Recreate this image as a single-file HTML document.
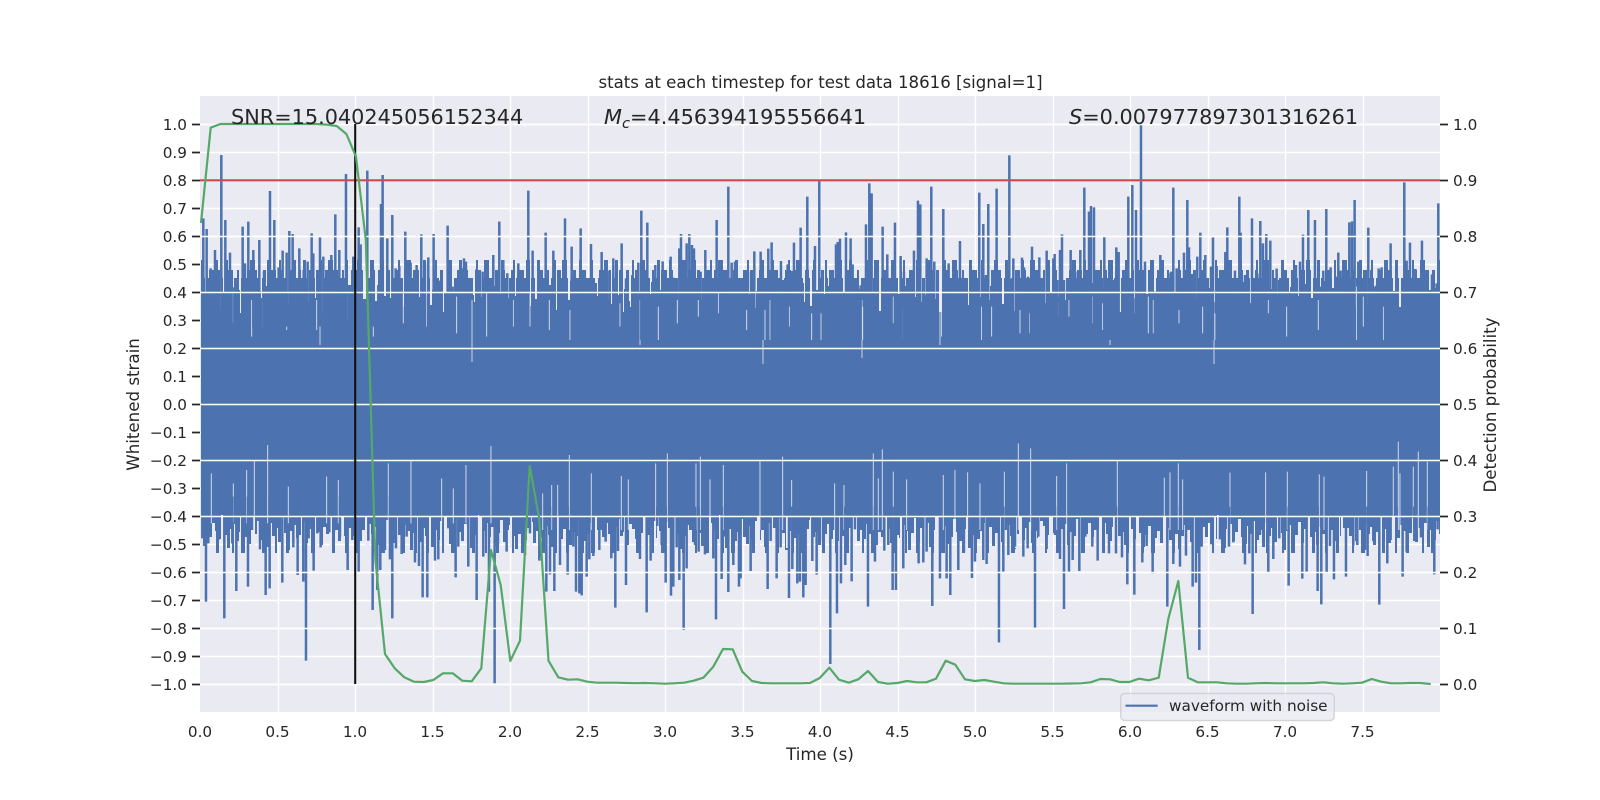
<!DOCTYPE html>
<html><head><meta charset="utf-8"><title>stats at each timestep</title>
<style>html,body{margin:0;padding:0;background:#fff}svg{display:block}text{font-family:"DejaVu Sans","Liberation Sans",sans-serif;fill:#262626}</style></head>
<body>
<svg width="1600" height="800" viewBox="0 0 1600 800" xmlns="http://www.w3.org/2000/svg">
<defs>
<clipPath id="ax"><rect x="201" y="96" width="1239" height="616"/></clipPath>
<g id="seg">
<path fill="#4c72b0" d="M0 340V305h3V298h3V312h3V301h3V294h3V308h3V316h3V299h3V303h3V290h3V311h3V306h3V296h3V319h3V302h3V288h3V300h3V309h3V314h3V297h3V304h3V292h3V313h3V307h3V295h3V318h3V301h3V286h3V299h3V310h3V305h3V293h3V315h3V302h3V289h3V308h3V298h3V312h3V304h3V296h3V320h3V300h3V287h3V306h3V311h3V294h3V303h3V316h3V298h3V291h3V309h3V301h3V314h3V295h3V305h3V288h3V312h3V299h3V307h3V293h3V317h3V302h3V285h3V304h3V310h3V297h3V300h3V313h3V292h3V306h3V315h3V298h3V303h3V290h3V308h3V301h3V311h3V296h3V305h3V294h3V318h3V299h3V307h3V340z"/>
</g>
</defs>
<rect x="200" y="96" width="1240" height="616" fill="#eaeaf2"/>
<g stroke="#fff" stroke-width="1.4" fill="none">
<path d="M278.5 96V712M355.5 96V712M433.5 96V712M510.5 96V712M588.5 96V712M665.5 96V712M743.5 96V712M820.5 96V712M898.5 96V712M975.5 96V712M1053.5 96V712M1130.5 96V712M1208.5 96V712M1285.5 96V712M1363.5 96V712"/>
<path d="M200 124.5H1440M200 152.5H1440M200 180.5H1440M200 208.5H1440M200 236.5H1440M200 264.5H1440M200 292.5H1440M200 320.5H1440M200 348.5H1440M200 376.5H1440M200 404.5H1440M200 432.5H1440M200 460.5H1440M200 488.5H1440M200 516.5H1440M200 544.5H1440M200 572.5H1440M200 600.5H1440M200 628.5H1440M200 656.5H1440M200 684.5H1440"/>
</g>
<g clip-path="url(#ax)">
<rect x="200" y="325" width="1240" height="180" fill="#4c72b0"/>
<use href="#seg" transform="translate(201,-6)"/>
<use href="#seg" transform="translate(699,-6) scale(-1,1)"/>
<use href="#seg" transform="translate(699,-6)"/>
<use href="#seg" transform="translate(1197,-6) scale(-1,1)"/>
<use href="#seg" transform="translate(1197,-6)"/>
<use href="#seg" transform="translate(101,835) scale(1,-1)"/>
<use href="#seg" transform="translate(599,835) scale(-1,-1)"/>
<use href="#seg" transform="translate(599,835) scale(1,-1)"/>
<use href="#seg" transform="translate(1097,835) scale(-1,-1)"/>
<use href="#seg" transform="translate(1097,835) scale(1,-1)"/>
<use href="#seg" transform="translate(1595,835) scale(-1,-1)"/>
<!-- density layers top: each reaches down into the solid band -->
<g fill="none" stroke="#4c72b0">
<path stroke-width="44" stroke-dasharray="4 2 3 3 6 2 2 4 5 2 4 3 3 2 7 3" d="M201 300H1440"/>
<path stroke-width="52" stroke-dasharray="3 5 5 4 2 7 6 4 2 8 4 3 3 6" d="M201 296H1440"/>
<path stroke-width="62" stroke-dasharray="2 11 4 7 3 14 2 6 5 12 3 9" d="M201 291H1440"/>
</g>
<!-- gaps + density bottom -->
<path fill="none" stroke="#eaeaf2" stroke-width="32" stroke-dasharray="2 13 3 21 2 9 4 27 2 17 3 11" d="M201 532H1440"/>
<path fill="none" stroke="#4c72b0" stroke-width="48" stroke-dasharray="2 9 3 13 2 7 4 17 3 10" d="M205 529H1440"/>
<!-- top thin slits -->
<g stroke="#eaeaf2" stroke-width="3" opacity=".85" fill="none">
<path transform="translate(120,60) scale(.3333)" d="M340 700V790M395 720V830M430 700V800M500 710V810M590 720V810M680 700V780M760 700V830M850 700V790M920 690V800M1010 710V820M1100 700V830M1180 720V800M1230 700V800"/>
<path transform="translate(540,80) scale(.3333)" d="M28 660V750M90 690V780M240 670V740M355 680V780M412 660V730M475 660V710M535 640V700M620 690V750M675 690V780M690 660V780M748 680V740M815 700V780M843 700V780M968 680V780M1060 650V730M1090 680V780M1205 690V770M1325 680V780M1355 680V770"/>
<path transform="translate(1000,80) scale(.3333)" d="M60 690V760M88 700V760M175 670V710M207 660V710M278 650V730M308 670V750M355 650V690M405 650V700M445 650V760M460 660V760M537 690V730M608 680V760M645 700V780M805 660V700M860 680V770M955 660V750M1070 620V780M1150 680V780M1090 650V740"/>
</g>
<path stroke="#eaeaf2" stroke-width="1" opacity=".8" fill="none" d="M472 300V362M763 300V364M862 300V358M1214 300V364M320 300V345M640 300V345M940 300V345M1110 300V345"/>
<!-- bottom thin slits -->
<g stroke="#eaeaf2" stroke-width="3" opacity=".85" fill="none">
<path transform="translate(120,430) scale(.3333)" d="M443 45V280M403 90V280M274 130V280M805 100V280M873 92V280M1113 48V280M1038 105V280M620 140V280M965 145V280M340 160V280M380 120V280M505 170V280M655 150V280M1000 175V280"/>
<path transform="translate(540,440) scale(.3333)" d="M88 45V270M382 40V270M481 50V270M550 75V270M660 58V270M1000 40V270M1027 28V270M1015 115V270M154 100V270M244 108V270M265 118V270M347 70V270M468 70V270M510 118V270M728 50V270M755 120V270M884 130V270M912 135V270M1060 95V270M1100 118V270M1210 105V270M1245 90V270M1283 97V270M1320 130V270M8 160V270M35 135V270M53 135V270"/>
<path transform="translate(1000,440) scale(.3333)" d="M92 25V270M200 70V270M352 60V270M55 10V270M13 95V270M170 108V270M535 70V270M510 97V270M493 113V270M548 118V270M690 98V270M797 97V270M862 95V270M958 103V270M972 110V270M1100 93V270M1195 5V270M1255 35V270M1180 80V270M1282 65V270M1240 80V270M1200 100V270"/>
</g>
<!-- top spikes -->
<g stroke="#4c72b0" stroke-width="7.5" fill="none">
<path transform="translate(120,60) scale(.3333)" d="M250 800V475M260 800V507M272 800V625M285 800V570M304 800V285M316 800V480M330 800V578M343 800V682M368 800V500M375 800V610M385 800V485M400 800V570M418 800V540M432 800V635M450 800V393M463 800V480M476 800V622M488 800V572M500 800V578M508 800V513M518 800V522M538 800V565M551 800V630M563 800V605M575 800V520M580 800V580M600 800V532M610 800V590M634 800V585M646 800V463M658 800V570M670 800V682M678 800V342M700 800V590M716 800V502M722 800V553M742 800V332M760 800V670M775 800V675M783 800V432M788 800V345M802 800V535M817 800V465M827 800V625M838 800V618M856 800V515M872 800V608M890 800V615M904 800V523M915 800V610M925 800V592M941 800V522M960 800V662M983 800V497M998 800V680M1025 800V625M1032 800V595M1038 800V605M1070 800V628M1088 800V635M1120 800V585M1138 800V485M1150 800V600M1162 800V640M1175 800V668M1195 800V610M1208 800V638M1225 800V392M1238 800V572M1255 800V618"/>
<path transform="translate(540,80) scale(.3333)" d="M17 780V458M40 780V512M75 780V415M95 780V500M122 780V445M153 780V492M185 780V516M208 780V572M220 780V535M230 780V548M245 780V490M258 780V595M277 780V585M295 780V548M304 780V392M322 780V428M346 780V555M368 780V544M392 780V530M400 780V593M418 780V505M423 780V462M448 780V462M440 780V490M456 780V495M462 780V505M482 780V575M496 780V510M518 780V607M530 780V420M546 780V610M556 780V586M565 780V320M575 780V548M585 780V545M600 780V594M633 780V575M643 780V514M662 780V515M668 780V545M685 780V506M695 780V487M705 780V570M723 780V543M732 780V600M743 780V553M755 780V573M762 780V488M782 780V443M802 780V350M825 780V498M838 780V302M865 780V618M873 780V607M888 780V493M893 780V486M900 780V476M918 780V457M932 780V475M938 780V553M952 780V622M962 780V616M978 780V433M988 780V310M995 780V340M1028 780V440M1042 780V523M1065 780V428M1082 780V528M1092 780V575M1112 780V612M1122 780V512M1134 780V362M1141 780V373M1160 780V535M1174 780V320M1183 780V545M1210 780V387M1226 780V550M1240 780V595M1260 780V483M1298 780V596M1318 780V338M1330 780V432M1345 780V372M1338 780V585M1370 780V326"/>
<path transform="translate(1000,80) scale(.3333)" d="M28 780V226M40 780V535M18 780V668M52 780V628M66 780V533M72 780V562M84 780V590M96 780V500M118 780V532M130 780V610M140 780V512M160 780V535M164 780V522M172 780V600M180 780V510M186 780V463M192 780V600M212 780V510M222 780V575M226 780V575M241 780V510M253 780V323M267 780V395M273 780V378M282 780V382M290 780V588M302 780V620M313 780V468M332 780V624M349 780V502M356 780V516M372 780V595M380 780V552M385 780V350M397 780V315M408 780V390M423 780V135M435 780V545M452 780V645M465 780V635M481 780V525M505 780V580M513 780V575M520 780V323M530 780V565M543 780V607M552 780V518M562 780V360M567 780V502M576 780V582M592 780V530M601 780V458M616 780V525M633 780V560M639 780V472M650 780V558M662 780V596M676 780V516M682 780V442M692 780V542M705 780V572M718 780V350M722 780V458M735 780V585M756 780V415M772 780V580M781 780V423M789 780V490M799 780V462M811 780V482M822 780V605M830 780V566M843 780V630M868 780V635M888 780V555M900 780V545M909 780V464M915 780V612M925 780V390M945 780V420M961 780V620M970 780V572M979 780V387M992 780V562M1008 780V590M1015 780V518M1022 780V572M1035 780V612M1048 780V427M1056 780V424M1064 780V360M1075 780V545M1105 780V443M1128 780V617M1136 780V565M1145 780V562M1158 780V588M1172 780V490M1190 780V630M1213 780V307M1220 780V542M1230 780V488M1236 780V602M1246 780V567M1266 780V482M1275 780V618M1280 780V610M1296 780V583M1310 780V610M1315 780V370"/>
<!-- bottom spikes -->
<path transform="translate(120,430) scale(.3333)" d="M247 200V325M258 200V515M265 200V340M280 200V270M295 200V330M313 200V565M325 200V280M337 200V340M349 200V483M368 200V318M384 200V470M396 200V300M420 200V358M437 200V495M449 200V475M465 200V315M487 200V458M497 200V270M520 200V352M533 200V435M550 200V455M558 200V692M566 200V325M581 200V422M592 200V310M602 200V352M628 200V307M642 200V305M660 200V320M683 200V420M697 200V330M716 200V425M745 200V332M758 200V540M772 200V480M781 200V420M795 200V360M810 200V388M817 200V565M828 200V355M845 200V372M860 200V320M885 200V397M897 200V408M908 200V502M922 200V502M945 200V392M955 200V388M985 200V295M1007 200V442M1015 200V350M1045 200V410M1070 200V510M1090 200V380M1107 200V485M1124 200V760M1134 200V345M1160 200V365M1215 200V375M1230 200V310M1258 200V392"/>
<path transform="translate(540,440) scale(.3333)" d="M19 200V455M30 200V403M43 200V453M60 200V375M83 200V404M100 200V320M108 200V455M118 200V460M125 200V466M140 200V410M148 200V358M160 200V348M178 200V330M197 200V305M214 200V355M226 200V503M234 200V333M258 200V435M275 200V245M300 200V357M320 200V517M332 200V362M352 200V258M365 200V315M377 200V428M393 200V467M400 200V440M410 200V322M418 200V420M431 200V570M440 200V385M465 200V315M476 200V335M495 200V343M520 200V355M528 200V538M545 200V417M555 200V290M565 200V456M580 200V375M597 200V440M602 200V415M632 200V393M637 200V298M683 200V447M692 200V303M710 200V415M722 200V322M747 200V474M757 200V387M772 200V430M780 200V425M790 200V472M797 200V435M817 200V363M830 200V404M840 200V302M871 200V672M891 200V520M903 200V430M916 200V375M935 200V424M945 200V268M984 200V500M990 200V270M1005 200V365M1033 200V332M1045 200V315M1058 200V450M1068 200V450M1090 200V385M1110 200V282M1136 200V370M1150 200V367M1160 200V335M1177 200V498M1200 200V415M1220 200V415M1231 200V465M1255 200V390M1272 200V338M1296 200V414M1305 200V365M1330 200V360M1340 200V372M1377 200V607"/>
<path transform="translate(1000,440) scale(.3333)" d="M10 200V395M25 200V345M45 200V320M70 200V350M83 200V325M105 200V563M115 200V290M140 200V327M165 200V285M180 200V357M192 200V507M207 200V395M218 200V360M238 200V393M256 200V290M277 200V320M293 200V362M327 200V340M348 200V340M366 200V352M382 200V433M403 200V464M427 200V367M440 200V318M458 200V400M480 200V255M502 200V500M520 200V372M540 200V380M558 200V347M578 200V440M588 200V428M598 200V630M605 200V320M634 200V313M660 200V298M687 200V320M700 200V307M735 200V373M748 200V340M758 200V522M780 200V285M805 200V398M820 200V357M838 200V295M866 200V437M888 200V275M907 200V416M920 200V395M940 200V290M953 200V453M964 200V493M980 200V398M990 200V318M1002 200V418M1038 200V410M1060 200V317M1072 200V315M1095 200V330M1103 200V348M1120 200V303M1138 200V494M1162 200V370M1172 200V300M1190 200V282M1208 200V410M1220 200V335M1243 200V303M1263 200V292M1286 200V320M1303 200V403M1313 200V268"/>
</g>
</g>
<!-- second axis grid over waveform -->
<path stroke="#fff" stroke-width="1.4" fill="none" d="M200 124.5H1440M200 180.5H1440M200 236.5H1440M200 292.5H1440M200 348.5H1440M200 404.5H1440M200 460.5H1440M200 516.5H1440M200 572.5H1440M200 628.5H1440M200 684.5H1440"/>
<path stroke="#c44e52" stroke-width="2.08" d="M200 180.3H1440"/>
<path stroke="#111" stroke-width="2.08" d="M355.2 124V684"/>
<polyline fill="none" stroke="#55a868" stroke-width="2.2" stroke-linejoin="round" points="201,223 210.7,127.7 220.4,124 317,124 327,124.7 336.7,126 346.4,134 356,156.7 365.8,240 375.4,560 385,654 394.7,668.3 404.3,677.3 414,681.7 423.7,682 433.3,680 443,673.3 452.7,673.3 462.3,680.7 471.7,681.3 481.3,668.3 491,550 500.7,585 510.3,661 520,640.7 529.7,466 539.3,519.3 548.5,660.7 558.3,677.3 568,679.7 577.7,679.3 587.3,681.7 597,682.7 606.7,682.7 616.3,682.7 626,683 635.7,683.2 645.3,683 655,683.3 664.7,683.7 674.3,683.3 684,682.7 693.7,680.7 703.3,677.7 713.3,666.7 723,649 732.7,649.3 742.3,671.7 752,681 761.7,683 771.3,683.3 781,683.3 790.7,683.3 800.3,683.3 810,683 819.7,678 829.3,667.7 839,679.7 848.7,682.7 858.3,679.3 868,671 878,682 887.7,683.7 897.3,683 907,681 916.7,682.3 926.3,682.3 936,678.7 945.7,660.7 955.3,664.7 965,679.3 974.7,681 984.3,680 994,681.7 1003.7,683.3 1013.3,683.7 1023,683.7 1032.7,683.7 1042.3,683.7 1052,683.7 1061.7,683.7 1071.3,683.5 1081,683.3 1090.7,682.3 1100.3,679 1110,679.3 1119.7,682 1129.3,682 1139,678.7 1148.7,680.3 1158.7,677.7 1168.3,619 1178.3,581 1188,677.7 1197.7,682.3 1207.3,682.3 1217,682.3 1226.7,683.3 1236.3,683.7 1246,683.7 1255.7,683.3 1265.3,683 1275,683.3 1284.7,683.3 1294.3,683.3 1304,683.3 1313.7,683 1323.3,682.3 1333,683.3 1342.7,683.7 1352.3,683.3 1362,682.7 1371.7,679 1381.3,681.7 1391,683.3 1400.7,683.3 1410.3,683 1420,683 1430.7,684"/>
<!-- annotations -->
<text x="231" y="124" font-size="20.8">SNR=15.040245056152344</text>
<text x="604" y="124" font-size="20.83"><tspan font-style="italic">M</tspan><tspan font-style="italic" font-size="14.6" dy="4">c</tspan><tspan dy="-4">=4.456394195556641</tspan></text>
<text x="1069" y="124" font-size="20.83"><tspan font-style="italic">S</tspan>=0.007977897301316261</text>
<!-- ticks -->
<path stroke="#262626" stroke-width="1.7" fill="none" d="M192 124.5H200M192 152.5H200M192 180.5H200M192 208.5H200M192 236.5H200M192 264.5H200M192 292.5H200M192 320.5H200M192 348.5H200M192 376.5H200M192 404.5H200M192 432.5H200M192 460.5H200M192 488.5H200M192 516.5H200M192 544.5H200M192 572.5H200M192 600.5H200M192 628.5H200M192 656.5H200M192 684.5H200"/>
<path stroke="#262626" stroke-width="1.7" fill="none" d="M1440 124.5H1448M1440 180.5H1448M1440 236.5H1448M1440 292.5H1448M1440 348.5H1448M1440 404.5H1448M1440 460.5H1448M1440 516.5H1448M1440 572.5H1448M1440 628.5H1448M1440 684.5H1448"/>
<!-- left labels -->
<g font-size="15.28" text-anchor="end">
<text x="187" y="130">1.0</text><text x="187" y="158">0.9</text><text x="187" y="186">0.8</text><text x="187" y="214">0.7</text><text x="187" y="242">0.6</text><text x="187" y="270">0.5</text><text x="187" y="298">0.4</text><text x="187" y="326">0.3</text><text x="187" y="354">0.2</text><text x="187" y="382">0.1</text><text x="187" y="410">0.0</text><text x="187" y="438">−0.1</text><text x="187" y="466">−0.2</text><text x="187" y="494">−0.3</text><text x="187" y="522">−0.4</text><text x="187" y="550">−0.5</text><text x="187" y="578">−0.6</text><text x="187" y="606">−0.7</text><text x="187" y="634">−0.8</text><text x="187" y="662">−0.9</text><text x="187" y="690">−1.0</text>
</g>
<!-- right labels -->
<g font-size="15.28">
<text x="1453" y="130">1.0</text><text x="1453" y="186">0.9</text><text x="1453" y="242">0.8</text><text x="1453" y="298">0.7</text><text x="1453" y="354">0.6</text><text x="1453" y="410">0.5</text><text x="1453" y="466">0.4</text><text x="1453" y="522">0.3</text><text x="1453" y="578">0.2</text><text x="1453" y="634">0.1</text><text x="1453" y="690">0.0</text>
</g>
<!-- x labels -->
<g font-size="15.28" text-anchor="middle">
<text x="200" y="737">0.0</text><text x="277.5" y="737">0.5</text><text x="355" y="737">1.0</text><text x="432.5" y="737">1.5</text><text x="510" y="737">2.0</text><text x="587.5" y="737">2.5</text><text x="665" y="737">3.0</text><text x="742.5" y="737">3.5</text><text x="820" y="737">4.0</text><text x="897.5" y="737">4.5</text><text x="975" y="737">5.0</text><text x="1052.5" y="737">5.5</text><text x="1130" y="737">6.0</text><text x="1207.5" y="737">6.5</text><text x="1285" y="737">7.0</text><text x="1362.5" y="737">7.5</text>
</g>
<text x="820.5" y="88" font-size="16.6" text-anchor="middle">stats at each timestep for test data 18616 [signal=1]</text>
<text x="820" y="760" font-size="16.67" text-anchor="middle">Time (s)</text>
<text transform="translate(139,404.5) rotate(-90)" font-size="16.67" text-anchor="middle">Whitened strain</text>
<text transform="translate(1496,405) rotate(-90)" font-size="16.67" text-anchor="middle">Detection probability</text>
<!-- legend -->
<rect x="1120.7" y="693.5" width="213.5" height="27" rx="4" ry="4" fill="#eaeaf2" fill-opacity=".8" stroke="#ccc" stroke-opacity=".8" stroke-width="1.4"/>
<path stroke="#4c72b0" stroke-width="2.08" d="M1125.5 705.7H1157.7"/>
<text x="1169" y="711" font-size="15.28">waveform with noise</text>
</svg>
</body></html>
